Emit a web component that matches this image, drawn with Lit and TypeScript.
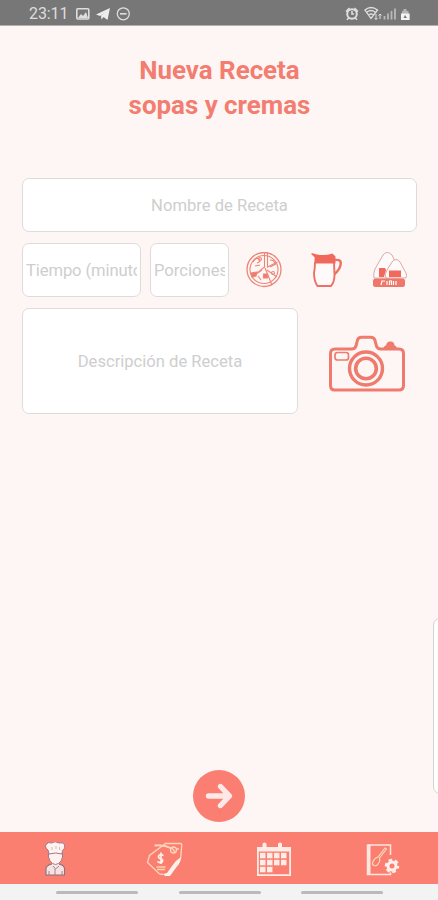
import { LitElement, html, css, svg } from "lit";
import { customElement } from "lit/decorators.js";

const pizza = html`<svg class="pizza" width="36" height="36" viewBox="246 252 36 36" fill="none" stroke="#ee8577" stroke-width="1.100">
  <circle cx="264" cy="269.500" r="17" stroke-width="1.300" />
  <circle cx="264" cy="269.500" r="14" />
  <path d="M264.500 252v15l-12 10M267.500 252v15l10-5M265 268l7 17M262 270l-10 7M267 270l10 7" />
  <path d="M253 262q3-5 6-3t-2 4M270 260q5 0 5 5M270 267l6-3M255 266l5-1M258 276l3 4" />
  <path d="M251 273l6-1-1 4-4 1zM263.500 274h4v4h-4z" fill="#ee7b6d" />
  <circle cx="260" cy="259" r="1.500" /><circle cx="273" cy="273" r="1.500" />
</svg>`;

const jug = html`<svg class="jug" width="34" height="38" viewBox="310 251 34 38">
  <path d="M311.500 253l5.500 1.500q8 1.500 15.500-1l3 3v7h-20q1-6-4-9z" fill="#f0695c" />
  <path d="M315 262q0 6-1 11 0 8 3.500 13h13.500q3.500-4 3.500-11l-.5-13" fill="#fffafa" stroke="#ef7165" stroke-width="1.900" />
  <path d="M314.500 263.500h20v-5h-20z" fill="#f0695c" />
  <path d="M335 260q7-1 5.500 5-1 5-6 9" fill="none" stroke="#ef7165" stroke-width="2.400" />
</svg>`;

const onigiri = html`<svg class="onigiri" width="36" height="38" viewBox="371 250 36 38">
  <g fill="#fffafa" stroke="#d9aaa7" stroke-width="1">
    <path d="M374 278q-1-4 1-9l8-14q4-5 9 0l9 19-1 4z" />
    <path d="M386 278q-2-3 1-8l5-8q4-5 8 0l6 11q1 3 0 5z" />
  </g>
  <path d="M379 268h6l1 2-2 7h-5zM389 270.500h12v6.500h-12z" fill="#f0695c" />
  <rect x="373" y="278.500" width="32" height="8.500" rx="2.500" fill="#f0766a" />
  <path d="M381 285l1-4h3M387 285v-4M389.500 285v-4h2v4M393.500 285v-4M396 285v-4" fill="none" stroke="#fff" stroke-width="1.200" />
</svg>`;

const camera = html`<svg class="camera" width="78" height="58" viewBox="328 335 78 58" fill="none" stroke="#ee7b6d" stroke-width="3">
  <path d="M335 349h17q3 0 4-3l1.500-6q.8-2.700 4-2.700h9q3.500 0 4.500 3l1.500 6q1 2.700 4 2.700h18.500q4.500 0 4.500 4.500v32q0 4.500-4.500 4.500h-64.500q-4 0-4-4.500v-32q0-4.500 4.500-4.500z" />
  <circle cx="366" cy="368.500" r="16.500" stroke-width="3.400" />
  <circle cx="366" cy="368.500" r="10.300" stroke-width="3.600" />
  <rect x="335" y="352.500" width="13.500" height="7.500" rx="2.500" stroke-width="1.700" />
  <path d="M383.500 349q.3-3.500 2.500-3.500.8-4 4-4h1q3 0 3.500 4 2 0 2.500 3.500z" fill="#ee7b6d" stroke="none" />
</svg>`;

const statusLeft = html`<svg class="status-left" width="58" height="18" viewBox="75 5 58 18" fill="none" stroke="#dedede" stroke-width="1.600">
  <rect x="76.800" y="8.700" width="12" height="10.300" rx="1" />
  <path d="M78 18l3-4 2 2 3-4 2 6z" fill="#dedede" stroke="none" />
  <path d="M96 14.500l14-6.500-2.500 12-4-3-2 2.500-.5-4 5-4-6 4.500z" fill="#ededed" stroke="none" />
  <circle cx="123.300" cy="13.800" r="6" stroke-width="1.300" /><path d="M120 13.800h6.600" />
</svg>`;

const statusRight = html`<svg class="status-right" width="68" height="18" viewBox="344 5 68 18" fill="none" stroke="#dedede" stroke-width="1.300">
  <circle cx="352" cy="14" r="4.800" stroke-width="2" />
  <path d="M352 11v3h2M346 11.500l3.500-3.500M358 11.500l-3.500-3.500M347 19.700l2-2M357 19.700l-2-2" stroke-width="1.600" />
  <path d="M365 10q6-5 12.500 0L371 18.500zM367 12q4-3 8 0M369 14.500q2-1 4 0" />
  <path d="M376 14v5.500m-1.500-1.500l1.500 1.500 1.500-1.500M380 19v-5m-1.500 1.500l1.500-1.500 1.500 1.500" stroke-width="1" />
  <path d="M384.500 16v3.500M388 13.500v6M391.500 11v8.500M395 8.500v11" stroke="#b8b8b8" stroke-width="1.800" />
  <path d="M401 20v-6h1v-3h1.500v-2h3v2h2v3h1v6z" fill="#b5b5b5" stroke="none" />
  <path d="M401 13.500h8.500v6.500h-8.500z" fill="#f3f3f3" stroke="none" /><path d="M403.500 18l1.500-3 2 3z" fill="#777" stroke="none" />
</svg>`;

const chef = html`<svg width="24" height="36" viewBox="43 842 24 36">
  <path d="M46 875v-7q2-4 7-4h4q6 0 7.500 4v7z" fill="#f5e2e1" stroke="#8d6f7d" stroke-width="1.100" />
  <path d="M52 860h7v6l-3.500 3-3.500-3z" fill="#f5e8e8" />
  <path d="M48.500 852h14v5q-1 5-4 6.500-3 2-6 0-3-2-4-6.500z" fill="#fff1f0" stroke="#a37b85" stroke-width="1" />
  <path d="M49 854l-1-4q-4-3-1.500-6 2-2.500 5-1 3.500-2.500 7.500 0 4-1 5.500 1.500 1.500 4-2 6l-.5 3.500q-6-2-13 0z" fill="#fff3f2" stroke="#9d7b85" stroke-width="1" />
  <path d="M52 850v-3M56 849v-3M59.500 850v-3" fill="none" stroke="#c9a9ab" stroke-width=".8" />
  <path d="M49 875v-4M62 875v-4M53 866l2.500 3 3.500-3M55 869v6" fill="none" stroke="#9b7b87" stroke-width=".9" />
</svg>`;

const tag = html`<svg width="38" height="38" viewBox="146 841 38 38" fill="none" stroke="#ffd5b9" stroke-width="1.300">
  <path d="M163 874.500l-3.500-.5-12-11.500 2-7 14-10.500 2-1.500h15q1.500 0 1.200 2l-1 12.500-4 6" />
  <path d="M154.500 845.500q9-1 17.500 3" stroke-width="1.900" /><circle cx="173.500" cy="850" r="3" /><path d="M172 848l3 4M176 849h3" />
  <path d="M163.500 855.500q-4.500-2-5 1 0 1.800 2.500 2.300 2.500.8 1.200 3-2 2-4.700-.5M161 852.500v11.500" stroke="#fff0e8" stroke-width="1.700" />
  <path d="M156.500 867h9M157 869.500h8" stroke="#ffd5ad" />
  <path d="M181 857q-5 3-9 9l-5 7-4 1 2 2h5l6.500-9q4.500-4.500 4.500-10z" fill="#fff2ea" stroke="none" />
</svg>`;

const calendar = html`<svg width="36" height="36" viewBox="256 842 36 36" fill="#ffece6">
  <path d="M257 847h5.500v-3q0-1.500 2-1.500t2 1.500v3h11.500v-3q0-1.500 2-1.500t2 1.500v3h9v29h-34zM258.800 851.500v22.700h30.400v-22.700z" fill-rule="evenodd" />
  ${[0, 1, 2].map((r) => [0, 1, 2, 3].filter((c) => r < 2 || c < 2).map((c) => svg`<rect x=${260 + c * 7} y=${852.800 + r * 7} width="5.500" height="5.500" />`))}
</svg>`;

const book = html`<svg width="36" height="36" viewBox="367 842 36 36" fill="none" stroke="#ffe7df" stroke-width="1.500">
  <path d="M368.500 845h23v10M368.500 844.500v30h23v-2" /><path d="M370 845v29" stroke-width="3" />
  <path d="M387.500 849l-7 9q1 3-1 5.500-2 3-4.500 2-2.500-1-1-4 1.500-3.500 5-4.500l7-9z" stroke="#ffd9bc" stroke-width="1.200" />
  <circle cx="393" cy="866" r="4" stroke="#ffefea" stroke-width="3" />
  <circle cx="393" cy="866" r="6" stroke="#ffefea" stroke-width="2.500" stroke-dasharray="3.600 2.683" stroke-dashoffset="1" />
</svg>`;

@customElement("app-root")
class AppRoot extends LitElement {
  static styles = css`
    :host { display: block; height: 900px; font-family: Roboto, "Noto Sans", sans-serif; }
    svg { display: block; flex: none; }
    .screen { position: relative; height: 100%; overflow: hidden; display: flex; flex-direction: column; background: #fef6f4; }
    .status { height: 26px; flex: none; display: flex; align-items: center; padding: 2px 26px 0 29px; box-sizing: border-box; background: #777; border-bottom: 1px solid #b5b0ae; color: #dedede; }
    .clock { width: 46px; font-size: 16px; letter-spacing: -0.1px; white-space: nowrap; }
    .status-right { margin-left: auto; }
    h1 { margin: 27px 0 0; padding-left: 1px; color: #f27d70; font-size: 25.900px; line-height: 35px; font-weight: 700; text-align: center; }
    .form { padding: 55px 21px 0 22px; display: flex; flex-direction: column; gap: 11px; }
    .row { display: flex; }
    .field { box-sizing: border-box; height: 54px; padding: 0 3px; border: 1px solid #dedcdb; border-radius: 7px; background: #fff; color: #cecece; font-size: 16.600px; display: flex; align-items: center; justify-content: center; }
    .text { overflow: hidden; white-space: nowrap; }
    .time { width: 119px; margin-right: 9px; }
    .time .text { letter-spacing: -0.1px; }
    .portions { width: 79px; }
    .pizza { margin: 9px 0 0 17px; }
    .jug { margin: 8px 0 0 28px; }
    .onigiri { margin: 7px 0 0 27px; }
    .description { width: 276px; height: 106px; }
    .camera { margin: 27px 0 0 30px; }
    .drawer { position: absolute; left: 433px; top: 618px; width: 30px; height: 176px; box-sizing: border-box; border: 1px solid #d5d2d1; border-radius: 7px; background: #fff; }
    .next { margin: auto auto 10px 193px; width: 52px; height: 52px; border-radius: 50%; background: #fa7e72; display: flex; align-items: center; justify-content: center; }
    .tabs { height: 52px; flex: none; display: flex; background: #fa7f71; }
    .tab { width: 109.500px; box-sizing: border-box; padding: 4px 0 0 1px; display: flex; align-items: center; justify-content: center; }
    .gestures { height: 16px; flex: none; display: flex; gap: 40.500px; padding: 7px 0 0 56px; box-sizing: border-box; background: #f3f3f3; }
    .gesture { width: 82px; height: 3px; border-radius: 2px; background: #b9bab9; }
  `;

  render() {
    return html`<div class="screen">
      <header class="status"><span class="clock">23:11</span>${statusLeft}${statusRight}</header>
      <h1>Nueva Receta<br />sopas y cremas</h1>
      <main class="form">
        <div class="field name"><span class="text">Nombre de Receta</span></div>
        <div class="row">
          <div class="field time"><span class="text">Tiempo (minutos)</span></div>
          <div class="field portions"><span class="text">Porciones</span></div>
          ${pizza}${jug}${onigiri}
        </div>
        <div class="row">
          <div class="field description"><span class="text">Descripción de Receta</span></div>
          ${camera}
        </div>
      </main>
      <div class="drawer"></div>
      <div class="next">
        <svg width="32" height="32" viewBox="0 0 32 32" fill="none" stroke="#ffe9e6" stroke-width="5.400" stroke-linecap="round" stroke-linejoin="round"><path d="M5.500 16h20M17.500 6.500l9 9.500-9 9.500" /></svg>
      </div>
      <nav class="tabs">${[chef, tag, calendar, book].map((icon) => html`<div class="tab">${icon}</div>`)}</nav>
      <footer class="gestures"><div class="gesture"></div><div class="gesture"></div><div class="gesture"></div></footer>
    </div>`;
  }
}
